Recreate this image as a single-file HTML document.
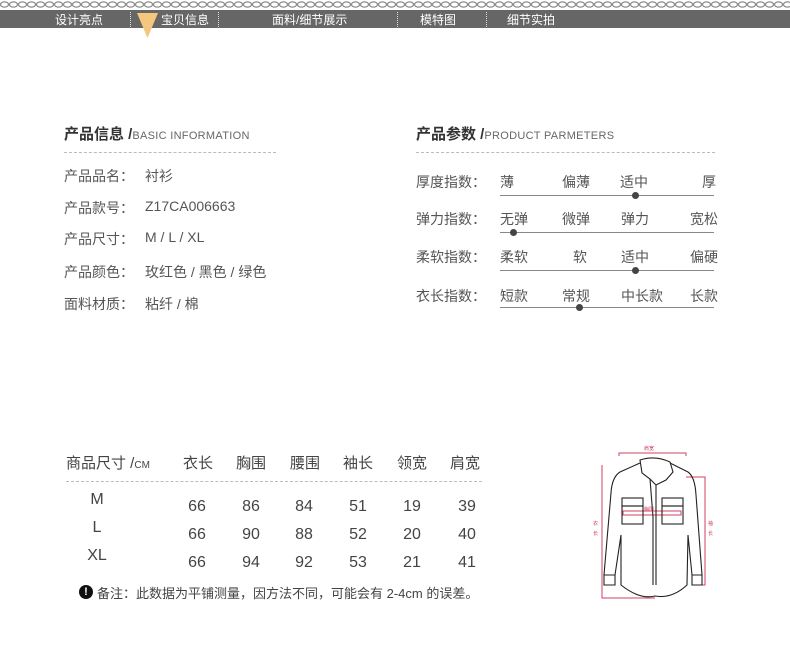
<!DOCTYPE html>
<html><head><meta charset="utf-8"><style>
*{margin:0;padding:0}
body{width:790px;height:649px;background:#fff;position:relative;overflow:hidden;font-family:"Liberation Sans","Noto Sans CJK SC",sans-serif;color:#555}
.a{position:absolute;white-space:nowrap}
.tab{position:absolute;top:12px;color:#fff;font-size:12px;line-height:16px}
.sep{position:absolute;top:12px;height:15px;border-left:1px dotted #ddd}
.h{font-size:15px;font-weight:bold;color:#333}
.h span{font-size:11px;font-weight:normal;color:#666;letter-spacing:.3px}
.dl{position:absolute;border-top:1px dashed #bbb;height:0}
.l{font-size:14px;color:#555}
.v{position:absolute;left:145px}
.sl{position:absolute;height:1px;background:#888;left:500px;width:214px}
.dot{position:absolute;width:7px;height:7px;border-radius:50%;background:#444}
.t{font-size:15px;color:#444}
.n{font-size:16px;color:#444;width:40px;text-align:center}
</style></head><body>
<svg class="a" style="left:0;top:0" width="790" height="9"><defs><pattern id="c" width="9" height="9" patternUnits="userSpaceOnUse"><ellipse cx="4.5" cy="4.5" rx="4" ry="2.6" fill="none" stroke="#888" stroke-width="1.2"/></pattern></defs><rect width="790" height="9" fill="url(#c)"/></svg>
<div class="a" style="left:0;top:10px;width:790px;height:18px;background:#666"></div>
<div class="tab" style="left:55px">设计亮点</div>
<div class="sep" style="left:130px"></div>
<svg class="a" style="left:137px;top:13px" width="22" height="26"><polygon points="0,0 21,0 10.5,25" fill="#f5c77e"/></svg>
<div class="tab" style="left:161px">宝贝信息</div>
<div class="sep" style="left:218px"></div>
<div class="tab" style="left:272px">面料/细节展示</div>
<div class="sep" style="left:397px"></div>
<div class="tab" style="left:420px">模特图</div>
<div class="sep" style="left:486px"></div>
<div class="tab" style="left:507px">细节实拍</div>

<div class="a h" style="left:64px;top:123px">产品信息 /<span>BASIC INFORMATION</span></div>
<div class="dl" style="left:64px;top:152px;width:212px"></div>
<div class="a l" style="left:64px;top:166px">产品品名：</div><div class="a l v" style="top:166px">衬衫</div>
<div class="a l" style="left:64px;top:198px">产品款号：</div><div class="a l v" style="top:198px">Z17CA006663</div>
<div class="a l" style="left:64px;top:229px">产品尺寸：</div><div class="a l v" style="top:229px">M / L / XL</div>
<div class="a l" style="left:64px;top:262px">产品颜色：</div><div class="a l v" style="top:262px">玫红色 / 黑色 / 绿色</div>
<div class="a l" style="left:64px;top:294px">面料材质：</div><div class="a l v" style="top:294px">粘纤 / 棉</div>

<div class="a h" style="left:416px;top:123px">产品参数 /<span>PRODUCT PARMETERS</span></div>
<div class="dl" style="left:416px;top:152px;width:299px"></div>

<div class="a l" style="left:416px;top:172px">厚度指数：</div>
<div class="a l" style="left:500px;top:172px">薄</div><div class="a l" style="left:562px;top:172px">偏薄</div><div class="a l" style="left:620px;top:172px">适中</div><div class="a l" style="left:702px;top:172px">厚</div>
<div class="sl" style="top:195px"></div><div class="dot" style="left:632px;top:192px"></div>

<div class="a l" style="left:416px;top:209px">弹力指数：</div>
<div class="a l" style="left:500px;top:209px">无弹</div><div class="a l" style="left:562px;top:209px">微弹</div><div class="a l" style="left:621px;top:209px">弹力</div><div class="a l" style="left:690px;top:209px">宽松</div>
<div class="sl" style="top:232px"></div><div class="dot" style="left:510px;top:229px"></div>

<div class="a l" style="left:416px;top:247px">柔软指数：</div>
<div class="a l" style="left:500px;top:247px">柔软</div><div class="a l" style="left:573px;top:247px">软</div><div class="a l" style="left:621px;top:247px">适中</div><div class="a l" style="left:690px;top:247px">偏硬</div>
<div class="sl" style="top:270px"></div><div class="dot" style="left:632px;top:267px"></div>

<div class="a l" style="left:416px;top:286px">衣长指数：</div>
<div class="a l" style="left:500px;top:286px">短款</div><div class="a l" style="left:562px;top:286px">常规</div><div class="a l" style="left:621px;top:286px">中长款</div><div class="a l" style="left:690px;top:286px">长款</div>
<div class="sl" style="top:307px"></div><div class="dot" style="left:576px;top:304px"></div>

<div class="a t" style="left:66px;top:452px">商品尺寸 /<span style="font-size:10px">CM</span></div>
<div class="a t" style="left:183px;top:452px">衣长</div>
<div class="a t" style="left:236px;top:452px">胸围</div>
<div class="a t" style="left:290px;top:452px">腰围</div>
<div class="a t" style="left:343px;top:452px">袖长</div>
<div class="a t" style="left:397px;top:452px">领宽</div>
<div class="a t" style="left:450px;top:452px">肩宽</div>
<div class="dl" style="left:66px;top:481px;width:416px"></div>

<div class="a n" style="left:77px;top:491px">M</div>
<div class="a n" style="left:77px;top:519px">L</div>
<div class="a n" style="left:77px;top:547px">XL</div>
<div class="a n" style="left:177px;top:498px">66</div><div class="a n" style="left:231px;top:498px">86</div><div class="a n" style="left:284px;top:498px">84</div><div class="a n" style="left:338px;top:498px">51</div><div class="a n" style="left:392px;top:498px">19</div><div class="a n" style="left:447px;top:498px">39</div>
<div class="a n" style="left:177px;top:526px">66</div><div class="a n" style="left:231px;top:526px">90</div><div class="a n" style="left:284px;top:526px">88</div><div class="a n" style="left:338px;top:526px">52</div><div class="a n" style="left:392px;top:526px">20</div><div class="a n" style="left:447px;top:526px">40</div>
<div class="a n" style="left:177px;top:554px">66</div><div class="a n" style="left:231px;top:554px">94</div><div class="a n" style="left:284px;top:554px">92</div><div class="a n" style="left:338px;top:554px">53</div><div class="a n" style="left:392px;top:554px">21</div><div class="a n" style="left:447px;top:554px">41</div>

<div class="a" style="left:79px;top:585px;width:14px;height:14px;border-radius:50%;background:#111;color:#fff;font-size:11px;font-weight:bold;text-align:center;line-height:14px">!</div>
<div class="a" style="left:97px;top:583px;font-size:13px;color:#444">备注：此数据为平铺测量，因方法不同，可能会有 2-4cm 的误差。</div>

<svg class="a" style="left:580px;top:435px" width="150" height="170" viewBox="0 0 150 170" fill="none">
<g stroke="#d04060" stroke-width="1">
<path d="M39 21V18H106V21"/><path d="M22 30V163H75"/><path d="M106 42H125V150H117"/><rect x="43" y="76" width="58" height="4"/>
</g>
<g stroke="#222" stroke-width="1.1">
<path d="M60 25Q75 20 90 27L93 37L86 45L76 50L70 44L62 38Z"/>
<path d="M60 28L40 37Q32 42 31 58L24 140H35L41 100V150Q60 165 75 161Q92 164 107 150L108 100L112 140H122L116 60Q115 42 108 37L90 28"/>
<path d="M70 44L73 82V150M76 50L76 150"/>
<rect x="42" y="63" width="21" height="8"/><rect x="42" y="71" width="21" height="18"/>
<rect x="82" y="63" width="21" height="8"/><rect x="82" y="71" width="21" height="18"/>
<path d="M24 140V150H35V140M112 140V150H122V140"/>
</g>
<g fill="#d04060" font-size="5" font-family="Noto Sans CJK SC,sans-serif">
<text x="64" y="15">肩宽</text><text x="64" y="76">胸围</text><text x="13" y="90">衣</text><text x="13" y="100">长</text><text x="128" y="90">袖</text><text x="128" y="100">长</text>
</g>
</svg>
</body></html>
